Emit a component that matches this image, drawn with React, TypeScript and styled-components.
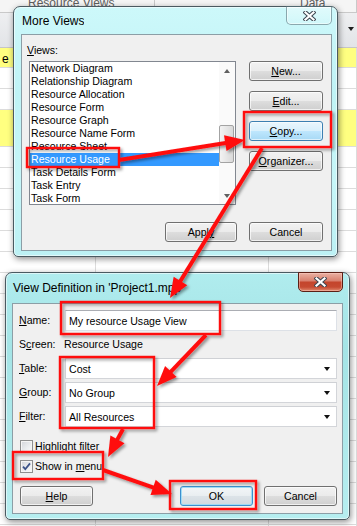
import React from 'react'
import styled, { createGlobalStyle, css } from 'styled-components'

const UI_FONT = `'Liberation Sans', Arial, sans-serif`

const GlobalStyle = createGlobalStyle`
  html, body {
    margin: 0;
    padding: 0;
    background: #fff;
  }
  body {
    font-family: ${UI_FONT};
  }
`

const VIEWS = [
  'Network Diagram',
  'Relationship Diagram',
  'Resource Allocation',
  'Resource Form',
  'Resource Graph',
  'Resource Name Form',
  'Resource Sheet',
  'Resource Usage',
  'Task Details Form',
  'Task Entry',
  'Task Form',
]

const SHEET_ROWS = [
  { h: 20, yellow: true, text: 'e' },
  { h: 21 },
  { h: 21 },
  { h: 37, yellow: true },
  ...Array.from({ length: 20 }, () => ({ h: 21 })),
] as { h: number; yellow?: boolean; text?: string }[]

type Pt = [number, number]

// red annotation arrows: [from, tip]
const ARROWS: [Pt, Pt][] = [
  [[119, 160], [245, 140]],
  [[262, 148], [170, 298]],
  [[206, 335], [157, 386]],
  [[123, 429], [108, 457]],
  [[103, 470], [172, 494]],
]

const BOXES = [
  { x: 27, y: 148, w: 92, h: 19 },
  { x: 244, y: 112, w: 87, h: 35 },
  { x: 61, y: 302, w: 159, h: 32 },
  { x: 60, y: 357, w: 94, h: 71 },
  { x: 13, y: 452, w: 90, h: 27 },
  { x: 170, y: 481, w: 86, h: 28 },
]

function arrowGeometry(from: Pt, to: Pt, len = 20, half = 8) {
  const dx = to[0] - from[0]
  const dy = to[1] - from[1]
  const d = Math.hypot(dx, dy)
  const ux = dx / d
  const uy = dy / d
  const bx = to[0] - ux * len
  const by = to[1] - uy * len
  const px = -uy * half
  const py = ux * half
  return {
    base: [bx + ux * 2, by + uy * 2] as Pt,
    points: `${to[0]},${to[1]} ${bx + px},${by + py} ${bx - px},${by - py}`,
  }
}

const App: React.FC = () => {
  return (
    <>
      <GlobalStyle />
      <Desktop>
        <Sheet>
          <SheetTitle>
            <SheetTitleCell $pad={28}>Resource Views</SheetTitleCell>
            <SheetTitleCell $pad={145}>Data</SheetTitleCell>
          </SheetTitle>
          <SheetHeader>
            <HeaderCaret />
          </SheetHeader>
          {SHEET_ROWS.map((row, i) => (
            <SheetRow key={i} $h={row.h} $yellow={row.yellow}>
              <SheetCell>{row.text}</SheetCell>
              <SheetCell />
              <SheetCell />
            </SheetRow>
          ))}
        </Sheet>

        <WindowStack>
          <Window $left={13} $top={0} $width={325} $height={251} $pad={[7, 5, 5]}>
            <TitleBar $h={27}>
              <Title>More Views</Title>
              <CloseButton $active={false} $w={46} $h={19}>
                <CloseGlyph />
              </CloseButton>
            </TitleBar>
            <Client>
              <ViewsGrid>
                <ViewsLabel>
                  <Key>V</Key>iews:
                </ViewsLabel>
                <span />
                <ListBox>
                  <ListItems>
                    {VIEWS.map((v) => (
                      <ListItem key={v} $selected={v === 'Resource Usage'}>
                        {v}
                      </ListItem>
                    ))}
                  </ListItems>
                  <ScrollBar>
                    <ScrollArrow>
                      <ArrowTri $up />
                    </ScrollArrow>
                    <ScrollTrack>
                      <ScrollThumb />
                    </ScrollTrack>
                    <ScrollArrow>
                      <ArrowTri />
                    </ScrollArrow>
                  </ScrollBar>
                </ListBox>
                <SideButtons>
                  <Button $w={74}>
                    <span>
                      <Key>N</Key>ew...
                    </span>
                  </Button>
                  <Button $w={74}>
                    <span>
                      <Key>E</Key>dit...
                    </span>
                  </Button>
                  <Button $w={74} $variant="hot">
                    <span>
                      <Key>C</Key>opy...
                    </span>
                  </Button>
                  <Button $w={74}>
                    <span>
                      <Key>O</Key>rganizer...
                    </span>
                  </Button>
                </SideButtons>
                <BottomCell $align="end">
                  <Button $w={72}>
                    <span>
                      Appl<Key>y</Key>
                    </span>
                  </Button>
                </BottomCell>
                <BottomCell $align="start">
                  <Button $w={74}>Cancel</Button>
                </BottomCell>
              </ViewsGrid>
            </Client>
          </Window>

          <Window
            $left={5}
            $top={15}
            $width={345}
            $height={248}
            $pad={[6, 6, 5]}
            $tint="deep"
          >
            <TitleBar $h={30}>
              <Title>View Definition in 'Project1.mpp'</Title>
              <CloseButton $active $w={45} $h={20}>
                <CloseGlyph />
              </CloseButton>
            </TitleBar>
            <Client>
              <DefinitionBody>
                <FormGrid>
                  <FieldLabel>
                    <Key>N</Key>ame:
                  </FieldLabel>
                  <Field>My resource Usage View</Field>

                  <FieldLabel>
                    S<Key>c</Key>reen:
                  </FieldLabel>
                  <PlainValue>Resource Usage</PlainValue>

                  <FieldLabel>
                    <Key>T</Key>able:
                  </FieldLabel>
                  <Field $combo>
                    Cost
                    <ComboCaret />
                  </Field>

                  <FieldLabel>
                    <Key>G</Key>roup:
                  </FieldLabel>
                  <Field $combo>
                    No Group
                    <ComboCaret />
                  </Field>

                  <FieldLabel>
                    <Key>F</Key>ilter:
                  </FieldLabel>
                  <Field $combo>
                    All Resources
                    <ComboCaret />
                  </Field>
                </FormGrid>

                <CheckList>
                  <CheckRow>
                    <CheckBox />
                    <span>Highlight filter</span>
                  </CheckRow>
                  <CheckRow>
                    <CheckBox>
                      <svg width="11" height="11" viewBox="0 0 11 11">
                        <path
                          d="M2 5.6 L4.3 8.2 L9 2.4"
                          fill="none"
                          stroke="#3b5288"
                          strokeWidth="1.8"
                        />
                      </svg>
                    </CheckBox>
                    <span>
                      Show in <Key>m</Key>enu
                    </span>
                  </CheckRow>
                </CheckList>

                <DialogButtons>
                  <Button $w={73}>
                    <span>
                      <Key>H</Key>elp
                    </span>
                  </Button>
                  <Spacer />
                  <Button $w={73} $variant="default">
                    OK
                  </Button>
                  <Button $w={73}>Cancel</Button>
                </DialogButtons>
              </DefinitionBody>
            </Client>
          </Window>
        </WindowStack>

        <Annotations width="357" height="526" viewBox="0 0 357 526">
          <defs>
            <filter id="shade" x="-20%" y="-20%" width="140%" height="140%">
              <feDropShadow dx="2" dy="2" stdDeviation="1.4" floodColor="#000" floodOpacity="0.4" />
            </filter>
          </defs>
          <g filter="url(#shade)">
            {BOXES.map((b, i) => (
              <rect
                key={i}
                x={b.x}
                y={b.y}
                width={b.w}
                height={b.h}
                fill="none"
                stroke="#ff1010"
                strokeWidth="2.4"
              />
            ))}
            {ARROWS.map(([from, to], i) => {
              const g = arrowGeometry(from, to)
              return (
                <g key={i}>
                  <line
                    x1={from[0]}
                    y1={from[1]}
                    x2={g.base[0]}
                    y2={g.base[1]}
                    stroke="#ff1010"
                    strokeWidth="4"
                  />
                  <polygon points={g.points} fill="#ff1010" />
                </g>
              )
            })}
          </g>
        </Annotations>
      </Desktop>
    </>
  )
}

export default App

const CloseGlyph = () => (
  <svg width="13" height="10" viewBox="0 0 13 10">
    <path d="M2.5 1.5 L10.5 8.5 M10.5 1.5 L2.5 8.5" stroke="#3d4650" strokeWidth="4.2" strokeLinecap="square" />
    <path d="M2.5 1.5 L10.5 8.5 M10.5 1.5 L2.5 8.5" stroke="#fff" strokeWidth="2.2" strokeLinecap="square" />
  </svg>
)

const Desktop = styled.div`
  position: relative;
  display: grid;
  width: 357px;
  height: 526px;
  overflow: hidden;
  background: #fff;
  font-family: ${UI_FONT};
  font-size: 10.6px;
  color: #000;

  > * {
    grid-area: 1 / 1;
  }
`

const Sheet = styled.div`
  display: flex;
  flex-direction: column;
  overflow: hidden;

  > * {
    flex: none;
  }
`

const SheetTitle = styled.div`
  box-sizing: border-box;
  height: 13px;
  display: grid;
  grid-template-columns: 155px 1fr;
  background: #f5f5f5;
  border-bottom: 1px solid #c9c9c9;
  overflow: hidden;
`

const SheetTitleCell = styled.div<{ $pad: number }>`
  padding-left: ${(p) => p.$pad}px;
  margin-top: -3px;
  font-size: 12px;
  line-height: 13px;
  color: #5e5e5e;
  border-right: 1px solid #c9c9c9;
`

const SheetHeader = styled.div`
  box-sizing: border-box;
  height: 35px;
  display: flex;
  align-items: center;
  justify-content: flex-end;
  padding: 0 3px 3px 0;
  background: linear-gradient(#eeeff1, #e2e4e7);
  border-bottom: 1px solid #c6c6c6;
`

const HeaderCaret = styled.span`
  width: 0;
  height: 0;
  border-left: 3.5px solid transparent;
  border-right: 3.5px solid transparent;
  border-top: 4px solid #1e1e1e;
`

const SheetRow = styled.div<{ $h: number; $yellow?: boolean }>`
  box-sizing: border-box;
  height: ${(p) => p.$h}px;
  display: grid;
  grid-template-columns: 96px 173px 1fr;
  background: ${(p) => (p.$yellow ? '#ffff80' : '#fff')};
  border-bottom: 1px solid #dcdcdc;
`

const SheetCell = styled.div`
  border-right: 1px solid #dcdcdc;
  padding: 5px 0 0 2px;
  font-size: 12px;
  line-height: 12px;
`

const WindowStack = styled.div`
  position: relative;
  z-index: 1;
  display: flex;
  flex-direction: column;
  align-items: flex-start;
  padding-top: 6px;
`

const Window = styled.div<{
  $left: number
  $top: number
  $width: number
  $height: number
  $pad: [number, number, number]
  $tint?: 'deep'
}>`
  box-sizing: border-box;
  display: flex;
  flex-direction: column;
  margin: ${(p) => p.$top}px 0 0 ${(p) => p.$left}px;
  width: ${(p) => p.$width}px;
  height: ${(p) => p.$height}px;
  padding: 0 ${(p) => p.$pad[1]}px ${(p) => p.$pad[2]}px ${(p) => p.$pad[0]}px;
  border: 1px solid #4a5a61;
  border-radius: 7px 7px 5px 5px;
  background: ${(p) =>
    p.$tint === 'deep'
      ? 'linear-gradient(180deg, #b0ecee 0%, #a4e4e6 30%, #ace8ea 60%, #b6eef0 100%)'
      : 'linear-gradient(180deg, #cdf8fa 0%, #bff3f6 35%, #c6f6f8 70%, #bcf1f4 100%)'};
  box-shadow: 1px 2px 6px rgba(0, 0, 0, 0.45), inset 0 0 0 1px rgba(255, 255, 255, 0.55);
`

const TitleBar = styled.div<{ $h: number }>`
  height: ${(p) => p.$h}px;
  flex: none;
  display: flex;
  align-items: center;
  justify-content: space-between;
  overflow: visible;
`

const Title = styled.div`
  padding-left: 1px;
  font-size: 12px;
  line-height: 14px;
  color: #000;
  white-space: nowrap;
  overflow: hidden;
`

const CloseButton = styled.div<{ $active: boolean; $w: number; $h: number }>`
  box-sizing: border-box;
  align-self: flex-start;
  flex: none;
  margin-top: -1px;
  width: ${(p) => p.$w}px;
  height: ${(p) => p.$h}px;
  display: flex;
  align-items: center;
  justify-content: center;
  border-radius: 0 0 5px 5px;
  ${(p) =>
    p.$active
      ? css`
          border: 1px solid #5b1f15;
          background: linear-gradient(
            180deg,
            #eab1a3 0%,
            #d98270 42%,
            #c4452c 52%,
            #c64a31 78%,
            #e08a6f 100%
          );
          box-shadow: inset 0 0 0 1px rgba(255, 210, 200, 0.45);
        `
      : css`
          border: 1px solid rgba(70, 100, 110, 0.55);
          background: linear-gradient(180deg, rgba(255, 255, 255, 0.4), rgba(255, 255, 255, 0.12));
          box-shadow: inset 0 0 0 1px rgba(255, 255, 255, 0.5);
        `}
`

const Client = styled.div`
  box-sizing: border-box;
  flex: 1;
  background: #f0f0f0;
  border: 1px solid #8c9ea6;
`

const ViewsGrid = styled.div`
  display: grid;
  grid-template-columns: 207px 74px;
  grid-template-rows: 26px 144px auto;
  column-gap: 13px;
  padding-left: 7px;
`

const ViewsLabel = styled.div`
  align-self: end;
  margin: 0 0 4px -2px;
  line-height: 13px;
`

const Key = styled.span`
  text-decoration: underline;
  text-underline-offset: 1px;
`

const ListBox = styled.div`
  box-sizing: border-box;
  display: flex;
  background: #fff;
  border: 1px solid #828790;
`

const ListItems = styled.div`
  flex: 1;
  display: flex;
  flex-direction: column;
`

const ListItem = styled.div<{ $selected?: boolean }>`
  height: 13px;
  line-height: 13px;
  padding-left: 1px;
  white-space: nowrap;
  background: ${(p) => (p.$selected ? '#3399ff' : 'transparent')};
  color: ${(p) => (p.$selected ? '#fff' : '#000')};
`

const ScrollBar = styled.div`
  width: 16px;
  display: flex;
  flex-direction: column;
  background: #fafafa;
`

const ScrollArrow = styled.div`
  height: 17px;
  display: flex;
  align-items: center;
  justify-content: center;
`

const ArrowTri = styled.span<{ $up?: boolean }>`
  width: 0;
  height: 0;
  border-left: 3.5px solid transparent;
  border-right: 3.5px solid transparent;
  ${(p) =>
    p.$up ? 'border-bottom: 4px solid #606060;' : 'border-top: 4px solid #606060;'}
`

const ScrollTrack = styled.div`
  flex: 1;
  padding: 46px 1px 0 0;
`

const ScrollThumb = styled.div`
  box-sizing: border-box;
  height: 38px;
  border: 1px solid #a3a3a3;
  border-radius: 2px;
  background: linear-gradient(90deg, #f3f3f3, #e6e6e6 50%, #d9d9d9);
`

const SideButtons = styled.div`
  display: flex;
  flex-direction: column;
  gap: 10px;
`

const BottomCell = styled.div<{ $align: 'start' | 'end' }>`
  display: flex;
  justify-content: ${(p) => (p.$align === 'end' ? 'flex-end' : 'flex-start')};
  margin-top: 17px;
  ${(p) => p.$align === 'end' && 'margin-right: -1px;'}
`

const Button = styled.div<{ $w: number; $variant?: 'hot' | 'default' }>`
  box-sizing: border-box;
  flex: none;
  width: ${(p) => p.$w}px;
  height: 20px;
  display: flex;
  align-items: center;
  justify-content: center;
  border-radius: 3px;
  font-size: 10.6px;
  color: #000;
  ${(p) =>
    p.$variant === 'hot'
      ? css`
          border: 1px solid #3c7fb1;
          background: linear-gradient(180deg, #eaf6fd 0%, #d9f0fc 48%, #bee6fd 52%, #a7d9f5 100%);
          box-shadow: inset 0 0 0 1px rgba(255, 255, 255, 0.6);
        `
      : p.$variant === 'default'
      ? css`
          border: 1px solid #3c8fce;
          background: linear-gradient(180deg, #f3f6f8 0%, #e9eef1 48%, #dce3e8 52%, #d2dae0 100%);
          box-shadow: inset 0 0 0 1px #9fdcf5;
        `
      : css`
          border: 1px solid #707070;
          background: linear-gradient(180deg, #f2f2f2 0%, #ebebeb 48%, #dddddd 52%, #cfcfcf 100%);
          box-shadow: inset 0 0 0 1px rgba(255, 255, 255, 0.7);
        `}
`

const DefinitionBody = styled.div`
  display: flex;
  flex-direction: column;
  padding: 6px 5px 0 6px;
`

const FormGrid = styled.div`
  display: grid;
  grid-template-columns: 46px 272px;
  grid-auto-rows: 21px;
  row-gap: 3px;
`

const FieldLabel = styled.div`
  align-self: center;
  line-height: 13px;
`

const PlainValue = styled.div`
  align-self: center;
  margin-left: -1px;
  line-height: 13px;
`

const Field = styled.div<{ $combo?: boolean }>`
  box-sizing: border-box;
  display: flex;
  align-items: center;
  justify-content: space-between;
  padding: 0 6px 0 3px;
  background: #fff;
  border: 1px solid ${(p) => (p.$combo ? '#d3d5d9' : '#dde1e7')};
  border-top-color: ${(p) => (p.$combo ? '#cfd1d5' : '#abadb3')};
  white-space: nowrap;
`

const ComboCaret = styled.span`
  width: 0;
  height: 0;
  border-left: 3.5px solid transparent;
  border-right: 3.5px solid transparent;
  border-top: 4px solid #111;
`

const CheckList = styled.div`
  display: flex;
  flex-direction: column;
  gap: 7px;
  margin: 13px 0 0 1px;
`

const CheckRow = styled.div`
  display: flex;
  align-items: center;
  gap: 2px;
  height: 13px;
  line-height: 13px;
`

const CheckBox = styled.span`
  box-sizing: border-box;
  width: 13px;
  height: 13px;
  display: flex;
  align-items: center;
  justify-content: center;
  border: 1px solid #8e8f8f;
  background: linear-gradient(135deg, #d2d5da 0%, #eceef0 60%, #fbfbfb 100%);
  box-shadow: inset 0 0 0 1px #f5f5f5;
`

const DialogButtons = styled.div`
  display: flex;
  gap: 11px;
  margin: 13px 0 0 1px;
`

const Spacer = styled.div`
  flex: 1;
`

const Annotations = styled.svg`
  position: absolute;
  left: 0;
  top: 0;
  z-index: 2;
  pointer-events: none;
`
